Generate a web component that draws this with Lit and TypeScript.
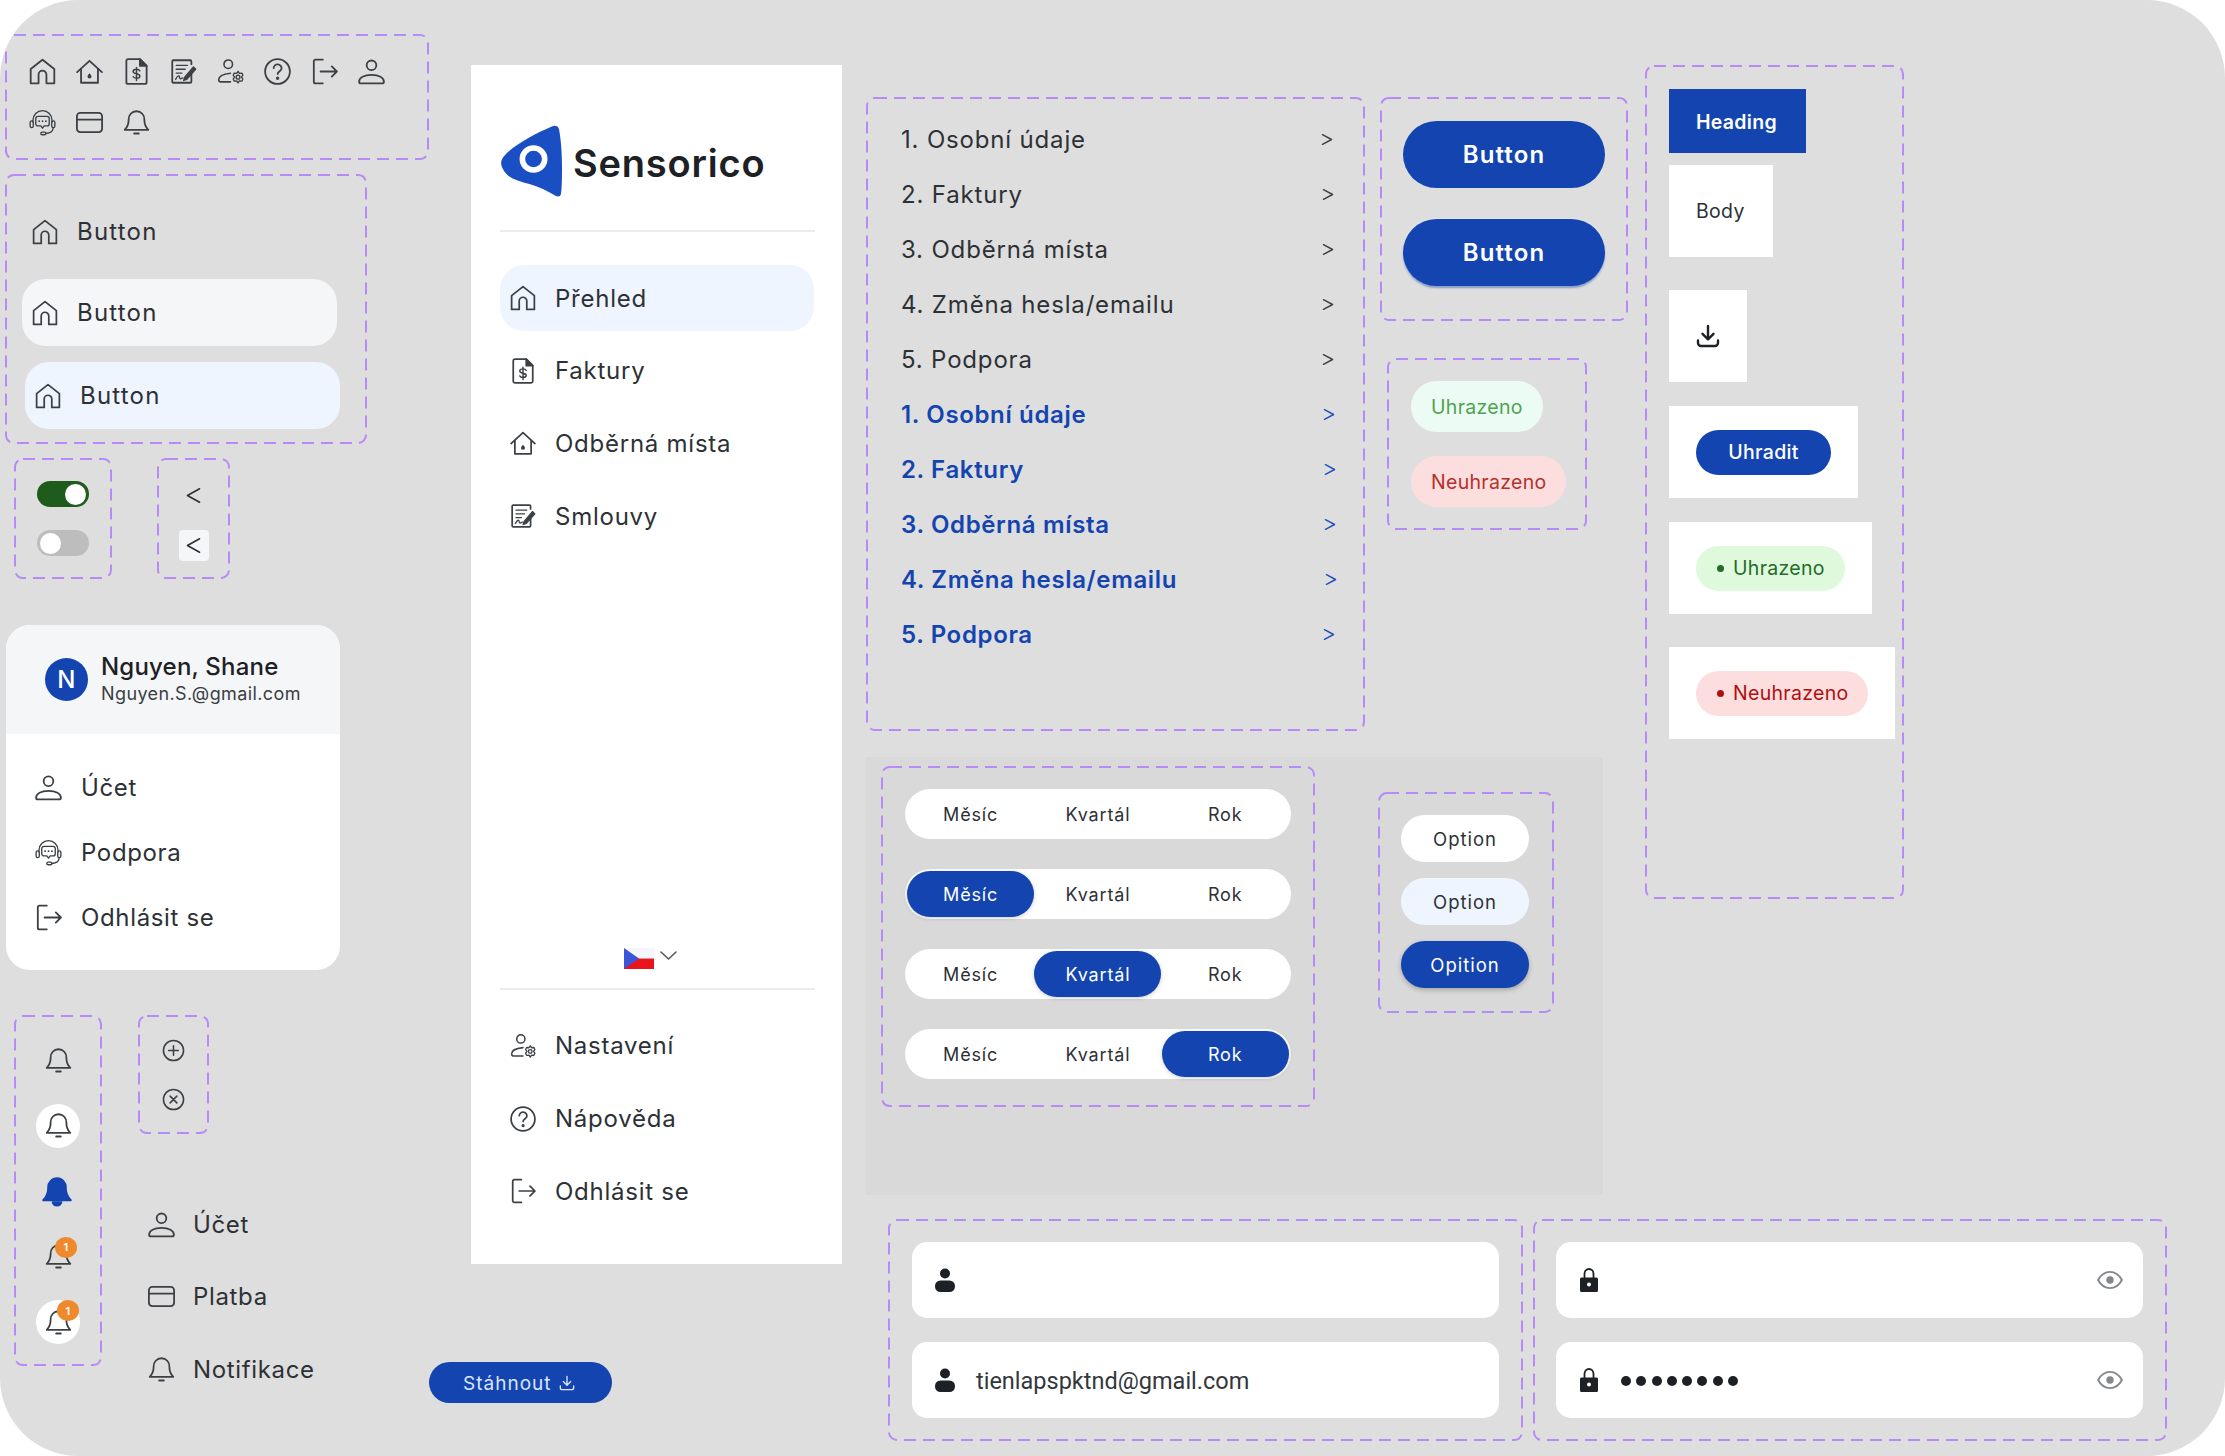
import { LitElement, html, css, svg, TemplateResult } from "lit";
import { customElement } from "lit/decorators.js";

const ic = (body: unknown, cls = "ico", vb = "0 0 24 24") => html`<svg class=${cls} viewBox=${vb} fill="none" stroke="currentColor" stroke-width="1.6" stroke-linecap="round" stroke-linejoin="round">${body}</svg>`;

const HOME = svg`<path d="M1.5 22.5V9.8L12 1.5l10.5 8.3v12.7h-7v-7.7a3.5 3.5 0 0 0-7 0v7.7h-7Z"/>`;
const HOME2 = svg`<path d="M1 12.5 12 2.5l11 10"/><path d="M4.5 10v12h15V10"/><path d="M12 13.5c1.2 1.4 1.8 2.2 1.8 3a1.8 1.8 0 0 1-3.6 0c0-.8.6-1.6 1.8-3Z" fill="currentColor" stroke="none"/>`;
const INVOICE = svg`<path d="M4.500 1H15l6 6v14.500a1.500 1.500 0 0 1-1.500 1.500h-15A1.500 1.500 0 0 1 3 21.500v-19A1.500 1.500 0 0 1 4.500 1Z"/><path d="M15 1l6 6h-6V1Z" fill="currentColor"/><path d="M15 11.500c-.5-1-1.500-1.500-3-1.500-1.800 0-3 .8-3 2 0 2.800 6 1.300 6 4 0 1.200-1.200 2-3 2-1.500 0-2.500-.4-3-1.500M12 8.500V20" stroke-width="1.300"/>`;
const CONTRACT = svg`<path d="M19 12V21a1 1 0 0 1-1 1H3a1 1 0 0 1-1-1V3a1 1 0 0 1 1-1h15a1 1 0 0 1 1 1v2.500"/><path d="M5.500 6.500h10M5.500 10h8M5.500 13.500h5" stroke-width="1.200"/><path d="M5 19c1-2 2-3.400 3-3 1 .4 0 2 1 2.400s1.400-.7 2.500-.7" stroke-width="1.200"/><path d="M13 17l-1 3 3-1L23 10l-2.200-2.200L13 17Z" fill="currentColor" stroke-width="1"/>`;
const USERSET = svg`<circle cx="10" cy="5.500" r="3.800" stroke-width="1.400"/><path d="M12 13.500C7 14 1.500 15.800 1.500 19.300c0 1.200.8 1.900 2 1.900H12" stroke-width="1.400"/><circle cx="18.700" cy="17" r="1.700" stroke-width="1.200"/><path d="M18.700 11.800l1.200 1.800 2.200-.2.900 2-1.300 1.600 1.300 1.600-.9 2-2.200-.2-1.200 1.800-1.200-1.800-2.200.2-.9-2 1.300-1.600-1.300-1.600.9-2 2.200.2 1.200-1.800Z" stroke-width="1.200"/>`;
const HELP = svg`<circle cx="12" cy="12" r="11"/><path d="M8.600 9a3.500 3.500 0 0 1 7 .3c0 2.300-3.500 2.700-3.500 5"/><circle cx="12.100" cy="18" r=".7" fill="currentColor"/>`;
const LOGOUT = svg`<path d="M10.500 1.500H4a1.500 1.500 0 0 0-1.500 1.500v18A1.500 1.500 0 0 0 4 22.500h6.500"/><path d="M8.500 12h14.500M18.500 7.500 23 12l-4.500 4.500"/>`;
const USER = svg`<circle cx="12" cy="6.500" r="4.300"/><path d="M1 21c0-3.600 4.400-6 11-6s11 2.400 11 6c0 .8-.5 1.500-1.500 1.500h-19C1.500 22.500 1 21.800 1 21Z"/>`;
const SUPPORT = svg`<g stroke-width="1.200"><path d="M3.500 11.500V10a8.500 8.500 0 0 1 17 0v1.500"/><rect x="1" y="10.500" width="2.800" height="6" rx="1.400"/><rect x="20.200" y="10.500" width="2.800" height="6" rx="1.400"/><path d="M8 6.500h8a2 2 0 0 1 2 2v4.500a2 2 0 0 1-2 2h-2.500L12 17l-1.500-2H8a2 2 0 0 1-2-2V8.500a2 2 0 0 1 2-2Z"/><path d="M9 10.800h.01M12 10.800h.01M15 10.800h.01" stroke-width="1.600"/><path d="M21.500 16.500c0 3.500-3 5-6.500 5.300"/><rect x="10.500" y="20.500" width="4.500" height="2.400" rx="1.200"/></g>`;
const CARD = svg`<rect x=".8" y="3.500" width="22.400" height="17" rx="3"/><path d="M1 9.500h22"/>`;
const BELL = svg`<path d="M12 2a7 7 0 0 0-7 7.500c0 5.500-2.500 8-3.500 9h21c-1-1-3.500-3.500-3.500-9A7 7 0 0 0 12 2Z"/><path d="M10 21.800h4" stroke-width="1.800"/>`;
const BELLFILL = svg`<path d="M12 1.500a7 7 0 0 0-7 7.500c0 6-2.500 8.500-4 10h22c-1.500-1.500-4-4-4-10a7 7 0 0 0-7-7.500Z" fill="currentColor"/><path d="M8.500 20.500a3.600 3.600 0 0 0 7 0Z" fill="currentColor"/>`;
const PLUSC = svg`<circle cx="12" cy="12" r="10.500"/><path d="M12 7v10M7 12h10"/>`;
const XC = svg`<circle cx="12" cy="12" r="10.500"/><path d="m8.500 8.500 7 7M15.500 8.500l-7 7"/>`;
const DL = svg`<path d="M12 2v13M6.500 9.800 12 15.300l5.500-5.500" stroke-width="2.400"/><path d="M2 16.500v2.500a3 3 0 0 0 3 3h14a3 3 0 0 0 3-3v-2.500" stroke-width="2.400"/>`;
const DLT = svg`<path d="M12 2v13M6.500 9.800 12 15.300l5.500-5.500" stroke-width="2"/><path d="M2 16.500v2.500a3 3 0 0 0 3 3h14a3 3 0 0 0 3-3v-2.500" stroke-width="2"/>`;
const PERSON = svg`<ellipse cx="12" cy="5.500" rx="5" ry="5" fill="currentColor" stroke="none"/><rect x="2" y="12.500" width="20" height="11.500" rx="5.500" fill="currentColor" stroke="none"/>`;
const LOCK = svg`<path d="M7.500 11V6a4.500 5 0 0 1 9 0V11" stroke-width="1.800"/><path d="M4.500 9.500h15a1.500 1.500 0 0 1 1.500 1.500v11.500a1.500 1.500 0 0 1-1.500 1.500h-15A1.500 1.500 0 0 1 3 22.500V11a1.500 1.500 0 0 1 1.500-1.500Z" fill="currentColor" stroke="none"/><circle cx="12" cy="16.500" r="2" fill="#fff" stroke="none"/>`;
const EYE = svg`<path d="M1 12C4 6.500 8 4.500 12 4.500s8 2 11 7.500c-3 5.500-7 7.500-11 7.500S4 17.500 1 12Z" stroke-width="1.800"/><circle cx="12" cy="12" r="3.400" fill="currentColor" stroke="none"/>`;
const LT = svg`<path d="M14 1.500 1.500 8.500 14 15.500" />`;
const GT = svg`<path d="M1.500 1.500 11 6.500 1.500 11.500" />`;

const dash = html`<svg class="dash" aria-hidden="true"><rect rx="8" ry="8"></rect></svg>`;
const frame = (cls: string, body: TemplateResult | TemplateResult[]) => html`<div class="frame ${cls}">${dash}${body}</div>`;
const btnRow = (cls: string) => html`<div class="nbtn ${cls}">${ic(HOME)}<span>Button</span></div>`;

const STEPS = ["1. Osobní údaje", "2. Faktury", "3. Odběrná místa", "4. Změna hesla/emailu", "5. Podpora"];
const PLAIN_NUDGE = [2, 1, 1, 1, 1];
const BLUE_NUDGE = [0, -1, -1, -2, 0];

const segment = (active: number) => html`<div class="seg">${["Měsíc", "Kvartál", "Rok"].map((t, i) => html`<span class=${i === active ? "on" : ""}>${t}</span>`)}</div>`;

@customElement("app-root")
export class AppRoot extends LitElement {
  static styles = css`
    :host { display: block; width: 2225px; height: 1456px; background: #fff; overflow: hidden; font-family: Inter, "Liberation Sans", sans-serif; color: #2d3136; letter-spacing: .3px; }
    * { box-sizing: border-box; }
    .board { position: relative; width: 2225px; height: 1456px; background: #dedede; border-radius: 78px; overflow: hidden; }
    .place { position: absolute; }
    .frame { position: absolute; }
    .dash { position: absolute; inset: 0; width: 100%; height: 100%; pointer-events: none; overflow: visible; }
    .dash rect { x: 1px; y: 1px; width: calc(100% - 2px); height: calc(100% - 2px); fill: none; stroke: #b78bf5; stroke-width: 2; stroke-dasharray: 12 7; }
    .ico { width: 27px; height: 27px; flex: none; display: block; color: #3c4045; }

    .f-icons { left: 5px; top: 34px; width: 424px; height: 126px; padding: 12px 14px; display: grid; grid-template-columns: repeat(8, 47px); grid-auto-rows: 51px; place-items: center; }
    .f-nbtn { left: 5px; top: 174px; width: 362px; height: 270px; padding: 24px 0 0 17px; display: flex; flex-direction: column; gap: 14px; }
    .nbtn { width: 315px; height: 67px; border-radius: 24px; display: flex; align-items: center; gap: 19px; padding-left: 10px; font-size: 24px; letter-spacing: 1.2px; }
    .nbtn .ico { width: 26px; height: 26px; }
    .hov { background: #f5f6f8; }
    .act { background: #eff5ff; }
    .shift { margin: 2px 0 0 3px; }

    .f-tog { left: 14px; top: 458px; width: 98px; height: 121px; padding-top: 23px; display: flex; flex-direction: column; align-items: center; gap: 23px; }
    .tog { width: 52px; height: 26px; border-radius: 13px; display: flex; align-items: center; padding: 0 3px; margin-left: -1px; }
    .tog i { width: 21px; height: 21px; border-radius: 50%; background: #fff; display: block; }
    .tog.on { background: #1f5c1b; justify-content: flex-end; }
    .tog.off { background: #bdbdbd; }
    .f-chev { left: 157px; top: 458px; width: 73px; height: 121px; padding-top: 22px; display: flex; flex-direction: column; align-items: center; gap: 19px; }
    .chev { width: 30px; height: 31px; border-radius: 4px; display: flex; align-items: center; justify-content: center; }
    .chev.box { background: #f5f6f8; }
    .chev .ico { width: 15px; height: 17px; color: #2d3136; }

    .card { left: 6px; top: 625px; width: 334px; height: 345px; background: #fff; border-radius: 24px; overflow: hidden; }
    .card-h { height: 109px; background: #f5f6f8; display: flex; align-items: center; padding-left: 39px; gap: 13px; }
    .avatar { width: 43px; height: 43px; border-radius: 50%; background: #1344b0; color: #fff; display: flex; align-items: center; justify-content: center; font-size: 24px; font-weight: 500; }
    .name { font-size: 24px; font-weight: 500; line-height: 27px; color: #1d2024; letter-spacing: .2px; }
    .mail { font-size: 18px; line-height: 24px; padding-top: 2px; color: #3a3e43; letter-spacing: .4px; }
    .card-b { padding: 21px 0 0 29px; }
    .row { height: 65px; display: flex; align-items: center; gap: 19px; font-size: 24px; letter-spacing: .65px; }

    .f-bell { left: 14px; top: 1015px; width: 88px; height: 351px; padding-top: 23px; display: flex; flex-direction: column; align-items: center; gap: 21.600px; }
    .bell { position: relative; width: 44px; height: 44px; border-radius: 50%; display: flex; align-items: center; justify-content: center; }
    .bell .ico { width: 27px; height: 29px; }
    .bell.w { background: #fff; }
    .bell.blue { margin-left: -2px; }
    .bell.blue .ico { color: #1344b0; width: 30px; height: 31px; }
    .badge { position: absolute; top: 2px; left: 19px; width: 22px; height: 21px; border-radius: 50%; background: #ef8a2c; color: #fff; font-size: 11px; font-weight: 600; display: flex; align-items: center; justify-content: center; }
    .bell.w .badge { top: 0; left: 21px; }
    .f-plus { left: 138px; top: 1015px; width: 71px; height: 119px; padding-top: 24px; display: flex; flex-direction: column; align-items: center; gap: 26px; }
    .f-plus .ico { width: 23px; height: 23px; }

    .list { left: 147px; top: 1188px; }
    .list .row { height: 72.500px; gap: 18px; }
    .list .slot { width: 28px; display: flex; justify-content: center; }

    .stahnout { left: 429px; top: 1362px; width: 183px; height: 41px; border-radius: 21px; background: #1344b0; color: #dbe6ff; display: flex; align-items: center; padding: 1px 0 0 34px; gap: 8px; font-size: 19px; letter-spacing: 1px; }
    .stahnout .ico { width: 16px; height: 16px; color: #dbe6ff; }

    .side { left: 471px; top: 65px; width: 371px; height: 1199px; background: #fff; display: flex; flex-direction: column; padding: 0 0 33px 29px; }
    .logo { height: 165px; display: flex; align-items: flex-start; padding: 60px 0 0 1px; gap: 11px; border-bottom: 0; }
    .logo svg { width: 61px; height: 72px; flex: none; }
    .logo span { font-size: 38px; font-weight: 600; line-height: 46px; margin-top: 15px; color: #1d2024; letter-spacing: .8px; }
    .rule { height: 2px; width: 315px; background: #ececec; flex: none; }
    .nav { width: 314px; height: 66px; border-radius: 24px; display: flex; align-items: center; gap: 19px; padding-left: 10px; font-size: 24px; flex: none; margin-bottom: 6.700px; letter-spacing: .75px; }
    .nav .ico { width: 26px; height: 26px; }
    .nav-top { margin-top: 33px; }
    .flag { margin-top: auto; height: 21px; display: flex; align-items: center; justify-content: center; gap: 6px; padding-right: 14px; width: 315px; margin-bottom: 19px; }
    .flag .f { width: 30px; height: 21px; flex: none; }
    .flag .c { width: 17px; height: 10px; margin-top: -4px; color: #55595e; }
    .nav-bot { margin-top: 23px; }

    .f-steps { left: 866px; top: 97px; width: 499px; height: 634px; padding: 15px 0 0 35px; }
    .step { height: 55px; width: 432px; display: flex; align-items: center; justify-content: space-between; font-size: 24px; letter-spacing: .83px; }
    .step .ico { width: 12px; height: 13px; stroke-width: 1.500; color: #3c4045; }
    .step.b { color: #1344b0; font-weight: 600; letter-spacing: .65px; }
    .step.b .ico { color: #1f50bf; }

    .f-btn { left: 1380px; top: 97px; width: 248px; height: 224px; padding: 24px 0 0 23px; display: flex; flex-direction: column; gap: 31px; }
    .big { width: 202px; height: 67px; border-radius: 34px; background: #1344b0; color: #fff; font-size: 24px; font-weight: 600; display: flex; align-items: center; justify-content: center; letter-spacing: 1.100px; }
    .big.sh { box-shadow: 0 2px 2px rgba(19, 68, 176, .45), 0 0 0 1px rgba(255,255,255,.25); }
    .f-pill { left: 1387px; top: 358px; width: 200px; height: 172px; padding: 23px 0 0 24px; display: flex; flex-direction: column; align-items: flex-start; gap: 24px; }
    .pill { height: 51px; border-radius: 26px; padding: 0 20px; display: flex; align-items: center; font-size: 19.500px; }
    .pill.ok { background: #ecfcf5; color: #4fa34f; }
    .pill.no { background: #fcdede; color: #b3312a; }

    .f-right { left: 1645px; top: 65px; width: 259px; height: 834px; padding: 24px 0 0 24px; display: flex; flex-direction: column; align-items: flex-start; }
    .cell { display: flex; align-items: center; background: #fff; padding: 0 27px; height: 92px; flex: none; font-size: 19.500px; }
    .cell.h { background: #1344b0; color: #fff; font-weight: 600; height: 64px; padding: 2px 29px 0 27px; }
    .cell.c28 { padding-right: 28px; }
    .m12 { margin-top: 12px; } .m32 { margin-top: 33px; } .m24 { margin-top: 24px; } .m33 { margin-top: 33px; }
    .cell .dl { width: 24px; height: 24px; color: #1d2024; }
    .pay { width: 135px; height: 45px; border-radius: 23px; background: #1344b0; color: #fff; font-weight: 500; display: flex; align-items: center; justify-content: center; }
    .st { height: 45px; border-radius: 23px; padding: 0 20px 0 21px; display: flex; align-items: center; gap: 9px; }
    .st i { width: 7px; height: 7px; border-radius: 50%; background: currentColor; display: block; }
    .st.ok { background: #dff9dd; color: #236b26; }
    .st.no { background: #fcdede; color: #b00f0f; }

    .panel { left: 866px; top: 757px; width: 737px; height: 438px; background: #d9d9d9; }
    .f-seg { left: 881px; top: 766px; width: 434px; height: 341px; padding: 23px 0 0 24px; display: flex; flex-direction: column; gap: 30px; }
    .seg { width: 386px; height: 50px; flex: none; border-radius: 25px; background: #fff; padding: 0 2px; display: grid; grid-template-columns: repeat(3, 127.300px); align-items: center; font-size: 18px; justify-items: center; letter-spacing: .85px; }
    .seg span { width: 127px; height: 46px; border-radius: 23px; display: flex; align-items: center; justify-content: center; }
    .seg span.on { background: #1344b0; color: #fff; box-shadow: 0 1px 4px rgba(0,0,0,.2); }
    .f-opt { left: 1378px; top: 792px; width: 176px; height: 221px; padding: 23px 0 0 23px; display: flex; flex-direction: column; gap: 16px; }
    .opt { width: 128px; height: 47px; border-radius: 24px; background: #fff; display: flex; align-items: center; justify-content: center; font-size: 18.500px; letter-spacing: 1px; }
    .opt.a { background: #eff5ff; }
    .opt.s { background: #1344b0; color: #fff; box-shadow: 0 2px 5px rgba(0,0,0,.25); }

    .f-in1 { left: 888px; top: 1219px; width: 635px; height: 222px; padding: 23px 0 0 24px; display: flex; flex-direction: column; gap: 24px; }
    .f-in2 { left: 1533px; top: 1219px; width: 634px; height: 222px; padding: 23px 0 0 23px; display: flex; flex-direction: column; gap: 24px; }
    .input { width: 587px; height: 76px; background: #fff; border-radius: 15px; display: flex; align-items: center; padding: 0 20px 0 21px; font-family: Roboto, sans-serif; font-size: 23.500px; letter-spacing: 0; color: #33373b; }
    .input .p { width: 24px; height: 26px; color: #1d2126; flex: none; }
    .input span { margin-left: 19px; padding-top: 2px; }
    .input .eye { width: 26px; height: 26px; color: #85888b; margin-left: auto; }
    .dots { display: flex; gap: 5.300px; margin-left: 20px; padding-top: 1px; }
    .dots i { width: 10px; height: 10px; border-radius: 50%; background: #1d2126; display: block; }
  `;

  render() {
    return html`<div class="board">
      ${frame("f-icons", [HOME, HOME2, INVOICE, CONTRACT, USERSET, HELP, LOGOUT, USER, SUPPORT, CARD, BELL].map((b) => ic(b)))}
      ${frame("f-nbtn", html`${btnRow("")}${btnRow("hov")}${btnRow("act shift")}`)}
      ${frame("f-tog", html`<div class="tog on"><i></i></div><div class="tog off"><i></i></div>`)}
      ${frame("f-chev", html`<div class="chev">${ic(LT, "ico", "0 0 15.500 17")}</div><div class="chev box">${ic(LT, "ico", "0 0 15.500 17")}</div>`)}

      <div class="place card">
        <div class="card-h"><div class="avatar">N</div><div><div class="name">Nguyen, Shane</div><div class="mail">Nguyen.S.@gmail.com</div></div></div>
        <div class="card-b">
          <div class="row">${ic(USER)}Účet</div>
          <div class="row">${ic(SUPPORT)}Podpora</div>
          <div class="row">${ic(LOGOUT)}Odhlásit se</div>
        </div>
      </div>

      ${frame("f-bell", html`
        <div class="bell">${ic(BELL)}</div>
        <div class="bell w">${ic(BELL)}</div>
        <div class="bell blue">${ic(BELLFILL)}</div>
        <div class="bell">${ic(BELL)}<div class="badge">1</div></div>
        <div class="bell w">${ic(BELL)}<div class="badge">1</div></div>`)}
      ${frame("f-plus", html`${ic(PLUSC)}${ic(XC)}`)}

      <div class="place list">
        <div class="row"><span class="slot">${ic(USER)}</span>Účet</div>
        <div class="row"><span class="slot">${ic(CARD)}</span>Platba</div>
        <div class="row"><span class="slot">${ic(BELL)}</span>Notifikace</div>
      </div>

      <div class="place stahnout">Stáhnout ${ic(DLT)}</div>

      <div class="place side">
        <div class="logo">
          <svg viewBox="0 0 60 72" preserveAspectRatio="none"><path fill="#1a4fc4" d="M50 1.500C53 0 56 1 57 4c2 10 3 24 3 38 0 10 0 20-1 27-.5 2.500-3 3-5 2-8-5-16-9-26-12C18 56 8 54 3 46c-4-6-4-11 1-16C14 19 35 8 50 1.500Z"/><circle cx="32" cy="34" r="11" fill="none" stroke="#fff" stroke-width="5.500"/></svg>
          <span>Sensorico</span>
        </div>
        <div class="rule"></div>
        <div class="nav nav-top act">${ic(HOME)}Přehled</div>
        <div class="nav">${ic(INVOICE)}Faktury</div>
        <div class="nav">${ic(HOME2)}Odběrná místa</div>
        <div class="nav">${ic(CONTRACT)}Smlouvy</div>
        <div class="flag">
          <svg class="f" viewBox="0 0 30 21"><rect width="30" height="10.500" fill="#f4f6fb"/><rect y="10.500" width="30" height="10.500" fill="#e8161c"/><path d="M0 0l15 10.500L0 21Z" fill="#3b55d6"/></svg>
          ${ic(svg`<path d="M1 1l7.500 7 7.500-7"/>`, "c", "0 0 17 10")}
        </div>
        <div class="rule"></div>
        <div class="nav nav-bot">${ic(USERSET)}Nastavení</div>
        <div class="nav">${ic(HELP)}Nápověda</div>
        <div class="nav">${ic(LOGOUT)}Odhlásit se</div>
      </div>

      ${frame("f-steps", html`
        ${STEPS.map((s, i) => html`<div class="step"><span>${s}</span><span style="margin-right:${PLAIN_NUDGE[i] - 2}px">${ic(GT, "ico", "0 0 12.500 13")}</span></div>`)}
        ${STEPS.map((s, i) => html`<div class="step b"><span>${s}</span><span style="margin-right:${BLUE_NUDGE[i] - 2}px">${ic(GT, "ico", "0 0 12.500 13")}</span></div>`)}`)}

      ${frame("f-btn", html`<div class="big">Button</div><div class="big sh">Button</div>`)}
      ${frame("f-pill", html`<div class="pill ok">Uhrazeno</div><div class="pill no">Neuhrazeno</div>`)}

      ${frame("f-right", html`
        <div class="cell h">Heading</div>
        <div class="cell m12 c28">Body</div>
        <div class="cell m32">${ic(DL, "ico dl")}</div>
        <div class="cell m24"><div class="pay">Uhradit</div></div>
        <div class="cell m24"><div class="st ok"><i></i>Uhrazeno</div></div>
        <div class="cell m33"><div class="st no"><i></i>Neuhrazeno</div></div>`)}

      <div class="place panel"></div>
      ${frame("f-seg", html`${segment(-1)}${segment(0)}${segment(1)}${segment(2)}`)}
      ${frame("f-opt", html`<div class="opt">Option</div><div class="opt a">Option</div><div class="opt s">Opition</div>`)}

      ${frame("f-in1", html`
        <div class="input">${ic(PERSON, "p")}</div>
        <div class="input">${ic(PERSON, "p")}<span>tienlapspktnd@gmail.com</span></div>`)}
      ${frame("f-in2", html`
        <div class="input">${ic(LOCK, "p")}${ic(EYE, "eye")}</div>
        <div class="input">${ic(LOCK, "p")}<div class="dots">${Array.from({ length: 8 }, () => html`<i></i>`)}</div>${ic(EYE, "eye")}</div>`)}
    </div>`;
  }
}
